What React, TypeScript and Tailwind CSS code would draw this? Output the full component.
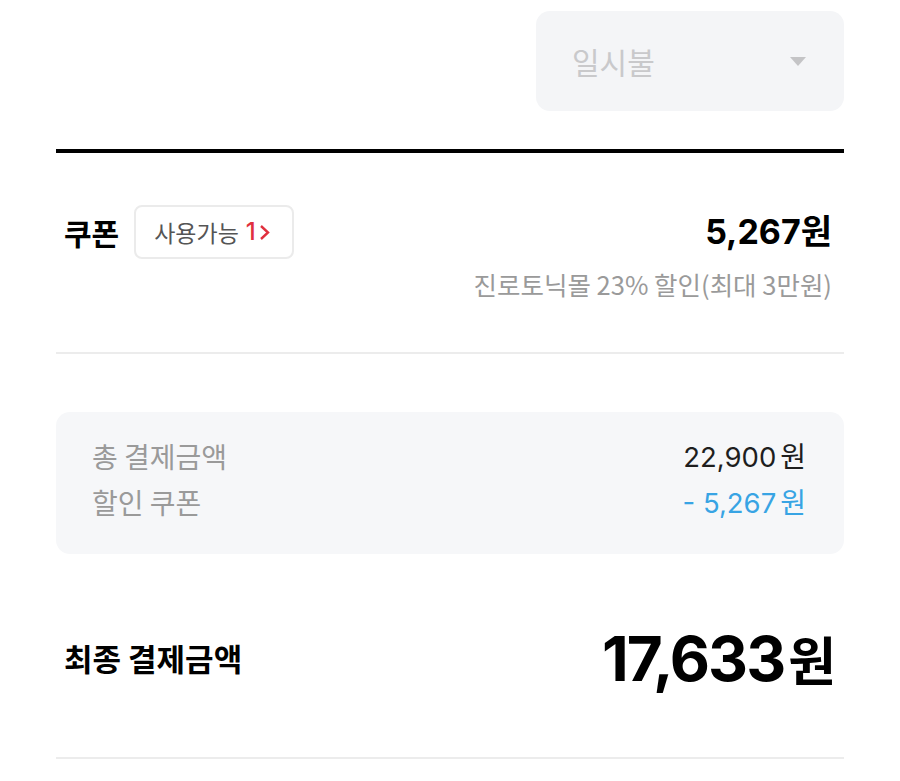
import React from "react";

const num = { fontFamily: 'Inter, "Noto Sans CJK KR", sans-serif' };
const kr = { fontFamily: '"Noto Sans CJK KR", sans-serif' };

export default function App() {
  return (
    <div className="w-[900px] h-[781px] bg-white overflow-hidden" style={kr}>
      <div className="px-[56px]">
        <div className="flex justify-end pt-[11px]">
          <div className="w-[308px] h-[100px] rounded-[14px] bg-[#f4f5f7] flex items-center justify-between pl-[36px] pr-[38px]">
            <span className="text-[30px] leading-none text-[#c9c9cb]">일시불</span>
            <svg width="16" height="9" viewBox="0 0 16 9">
              <path d="M0 0 L16 0 L8 9 Z" fill="#c4c4c6" />
            </svg>
          </div>
        </div>
        <div className="mt-[38px] h-[4px] bg-black" />
        <div className="pt-[52px] pb-[50px] pl-[8px] pr-[12px] border-b-2 border-[#ececec]">
          <div className="flex items-center justify-between h-[54px]">
            <div className="flex items-center gap-[15px]">
              <span className="text-[30px] leading-none font-bold text-black">쿠폰</span>
              <div className="h-[54px] pl-[18px] pr-[22px] rounded-[8px] border-2 border-[#ebebeb] flex items-center text-[23px] leading-none text-[#555]">
                사용가능
                <span className="ml-[7px] text-[#e0303e] font-medium text-[24px]" style={num}>1</span>
                <svg className="ml-[3px]" width="11" height="17" viewBox="0 0 11 17">
                  <path d="M2 2 L9 8.5 L2 15" stroke="#e0303e" strokeWidth="2.4" fill="none" />
                </svg>
              </div>
            </div>
            <span className="text-[34px] leading-none font-bold text-black" style={num}>5,267원</span>
          </div>
          <div className="mt-[7px] text-right text-[25.5px] leading-[36px] text-[#9a9a9a]">진로토닉몰 23% 할인(최대 3만원)</div>
        </div>
        <div className="mt-[58px] h-[142px] rounded-[14px] bg-[#f6f7f9] pl-[36px] pr-[38px] flex flex-col justify-center gap-[12px] pb-[8px]">
          <div className="flex justify-between items-center leading-[32px]">
            <span className="text-[28px] text-[#9a9a9a]">총 결제금액</span>
            <span className="text-[#1e1e1e] flex items-baseline">
              <span className="text-[27.5px]" style={num}>22,900</span>
              <span className="text-[28px] ml-[4px]">원</span>
            </span>
          </div>
          <div className="flex justify-between items-center leading-[32px]">
            <span className="text-[28px] text-[#9a9a9a]">할인 쿠폰</span>
            <span className="text-[#38a4e4] flex items-baseline">
              <span className="text-[27.5px]" style={num}>- 5,267</span>
              <span className="text-[28px] ml-[4px]">원</span>
            </span>
          </div>
        </div>
        <div className="h-[205px] pl-[8px] pr-[8px] pt-[6px] flex items-center justify-between border-b-2 border-[#ececec]">
          <span className="text-[31px] font-bold text-black">최종 결제금액</span>
          <span className="flex items-baseline text-black font-bold">
            <span className="text-[62px] leading-none tracking-[-2px]" style={num}>17,633</span>
            <span className="text-[52px] leading-none ml-[4px]">원</span>
          </span>
        </div>
      </div>
    </div>
  );
}
